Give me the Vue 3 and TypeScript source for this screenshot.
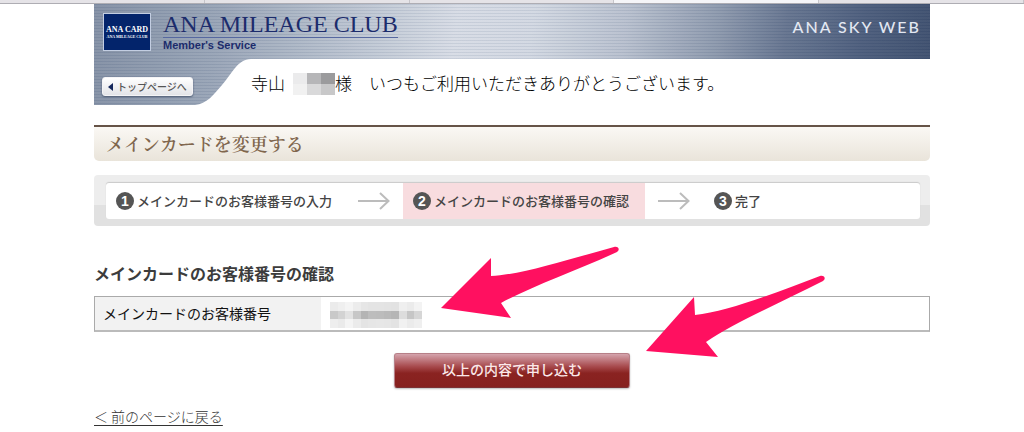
<script setup lang="ts">
interface Step {
  label: string
  current: boolean
}

const steps: Step[] = [
  { label: 'メインカードのお客様番号の入力', current: false },
  { label: 'メインカードのお客様番号の確認', current: true },
  { label: '完了', current: false },
]

const nameMask: string[][] = [
  ['#ebebec', '#b6b6b8', '#9b9b9d'],
  ['#f1f1f1', '#d9d9da', '#c8c8c9'],
]

const numberMask: string[][] = [
  ['#ebebeb', '#efefef', '#f4f4f4', '#ececec', '#e6e6e6', '#e4e4e4', '#e4e4e4', '#e3e3e3', '#e2e2e2', '#efefef', '#ebebeb', '#f3f3f3'],
  ['#c9c9c9', '#d3d3d3', '#e2e2e2', '#c7c7c7', '#b4b4b4', '#bdbdbd', '#bcbcbc', '#b9b9b9', '#b5b5b5', '#dddddd', '#c6c6c6', '#d6d6d6'],
  ['#eeeeee', '#eaeaea', '#f4f4f4', '#ebebeb', '#e4e4e4', '#e6e6e6', '#e7e7e7', '#e6e6e6', '#e3e3e3', '#f1f1f1', '#ebebeb', '#efefef'],
]
</script>

<template>
  <div class="screen">
    <div class="tabs" aria-hidden="true">
      <span class="tab"></span>
      <span class="tab"></span>
      <span class="tab"></span>
      <span class="tab active"></span>
      <span class="tab"></span>
    </div>

    <div class="page">
      <header class="banner">
        <div class="brand-row">
          <div class="badge">
            <span class="badge-main">ANA CARD</span>
            <span class="badge-sub">ANA MILEAGE CLUB</span>
          </div>
          <div class="brand">
            <span class="brand-name">ANA MILEAGE CLUB</span>
            <span class="brand-sub">Member's Service</span>
          </div>
          <span class="sky">ANA SKY WEB</span>
        </div>
        <div class="greet-row">
          <div class="top-cell">
            <button type="button" class="top-button">
              <svg width="5" height="8" viewBox="0 0 5 8"><path d="M5 0V8L0 4Z" fill="#15275c" /></svg>
              トップページへ
            </button>
          </div>
          <svg class="curve" width="56" height="46" viewBox="0 0 56 46">
            <path d="M0 46C12 45 18 36 27 26C39 12 42 1 56 0V46Z" fill="#fff" />
          </svg>
          <p class="greeting">
            <span>寺山</span>
            <svg class="name-mask" width="42" height="22" viewBox="0 0 42 22" shape-rendering="crispEdges">
              <template v-for="(row, r) in nameMask" :key="r">
                <rect v-for="(c, i) in row" :key="i" :x="i * 14" :y="r * 11" width="14" height="11" :fill="c" />
              </template>
            </svg>
            <span>様　いつもご利用いただきありがとうございます。</span>
          </p>
        </div>
      </header>

      <main>
        <h1 class="title">メインカードを変更する</h1>

        <div class="steps-frame">
          <ol class="steps">
            <li v-for="(step, i) in steps" :key="i" class="step" :class="{ current: step.current }">
              <span class="num">{{ i + 1 }}</span>
              <span>{{ step.label }}</span>
              <svg v-if="i === 0" class="next" width="32" height="18" viewBox="0 0 32 18"><path d="M0 9H30M22 1L30.500 9L22 17" /></svg>
              <svg v-if="i === 2" class="prev" width="32" height="18" viewBox="0 0 32 18"><path d="M0 9H30M22 1L30.500 9L22 17" /></svg>
            </li>
          </ol>
        </div>

        <h2 class="subtitle">メインカードのお客様番号の確認</h2>

        <table class="info">
          <tbody>
            <tr>
              <th scope="row">メインカードのお客様番号</th>
              <td>
                <svg class="number-mask" width="92" height="26" viewBox="0 0 96 27" preserveAspectRatio="none" shape-rendering="crispEdges">
                  <template v-for="(row, r) in numberMask" :key="r">
                    <rect v-for="(c, i) in row" :key="i" :x="i * 8" :y="r * 9" width="8" height="9" :fill="c" />
                  </template>
                </svg>
              </td>
            </tr>
          </tbody>
        </table>

        <button type="button" class="submit">以上の内容で申し込む</button>

        <p class="back"><a href="#">＜ 前のページに戻る</a></p>
      </main>

      <svg class="pointers" width="384" height="112" viewBox="441 246 384 112" aria-hidden="true">
        <path d="M441 308L491 258V276C520 275 570 259 614 247C619 246 620 250 617 252C578 270 530 287 501 303L511 318Z" />
        <path d="M646 351L694 297L695 315C728 312 780 291 820 276C825 275 826 279 823 281C780 303 735 322 706 342L718 357Z" />
      </svg>
    </div>
  </div>
</template>

<style>
body {
  margin: 0;
  background: #fff;
}
</style>

<style scoped>
.screen {
  font-family: "Liberation Sans", "Noto Sans CJK JP", sans-serif;
  color: #222;
}

.tabs {
  display: grid;
  grid-template-columns: repeat(5, 1fr);
  height: 4px;
  box-sizing: border-box;
  border-bottom: 1px solid #aeadb3;
}

.tab {
  background: #e5e3e7;
  border-right: 1px solid #c6c5ca;
}

.tab.active {
  background: #f5f5f8;
}

.page {
  position: relative;
  max-width: 836px;
  margin: 0 auto;
}

.banner {
  background:
    repeating-linear-gradient(180deg, rgba(60, 80, 115, 0.1) 0 1px, rgba(255, 255, 255, 0.04) 1px 3px),
    linear-gradient(97deg, #828fa4 0%, #98a4b6 15%, #b9c2cf 30%, #d7dce5 43%, #d2d8e2 52%, #b8c0ce 63%, #8c98ac 74%, #64738e 82%, #4b5c7b 91%, #3c4d6c 100%);
}

.brand-row {
  display: flex;
  align-items: flex-start;
  height: 55px;
}

.badge {
  box-sizing: border-box;
  width: 48px;
  height: 38px;
  margin: 9px 12px 0 9px;
  padding-top: 12px;
  border: 1px solid #c3cee2;
  background: #03246b;
  color: #fff;
  text-align: center;
  white-space: nowrap;
  overflow: hidden;
  display: flex;
  flex-direction: column;
  align-items: center;
}

.badge-main {
  font: bold 8px/8px "Liberation Serif", serif;
}

.badge-sub {
  font: bold 4px/5px "Liberation Serif", serif;
}

.brand {
  display: flex;
  flex-direction: column;
  margin-top: 8px;
  color: #1c2c6c;
}

.brand-name {
  font: 24px/25px "Liberation Serif", serif;
  border-bottom: 1px solid #5668a0;
}

.brand-sub {
  font-size: 11px;
  font-weight: bold;
  line-height: 15px;
}

.sky {
  margin: 14px 9px 0 auto;
  font: 500 16px/18px Lato, sans-serif;
  letter-spacing: 2px;
  color: #e3e8f2;
}

.greet-row {
  display: flex;
  height: 46px;
}

.top-cell {
  box-sizing: border-box;
  width: 101px;
  padding: 18px 0 0 8px;
}

.top-button {
  display: flex;
  align-items: center;
  gap: 4px;
  height: 19px;
  width: 91px;
  padding: 0 5px;
  border: 1px solid #f4f4f6;
  border-radius: 3px;
  background: linear-gradient(#fff, #e3e4e8);
  box-shadow: 0 1px 2px #4d5a72;
  color: #555;
  font: 500 10px/17px "Noto Sans CJK JP", sans-serif;
  white-space: nowrap;
}

.curve {
  display: block;
  flex: none;
}

.greeting {
  display: flex;
  flex: 1;
  align-items: center;
  margin: 0;
  padding-top: 1px;
  background: #fff;
  font: 300 17px/24px "Noto Sans CJK JP", sans-serif;
  white-space: nowrap;
  color: #000;
}

.name-mask {
  margin: 3px 0 0 8px;
}

.title {
  box-sizing: border-box;
  height: 36px;
  margin: 20px 0 14px;
  padding-left: 12px;
  border-top: 2px solid #665347;
  border-radius: 0 0 5px 5px;
  background: linear-gradient(#faf8f4, #e9e4da);
  color: #80664d;
  font: 600 18px/32px "Noto Serif CJK JP", "Noto Sans CJK JP", serif;
}

.steps-frame {
  padding: 8px 10px 7px 12px;
  border-radius: 4px;
  background: linear-gradient(#ededed 0 58%, #e1e1e1 58% 100%);
}

.steps {
  display: grid;
  grid-template-columns: 297fr 242fr 275fr;
  height: 36px;
  margin: 0;
  padding: 0;
  list-style: none;
  background: #fff;
  border-radius: 3px;
  box-shadow: 0 -1px 1px #c9c9c9;
}

.step {
  display: flex;
  align-items: center;
  gap: 3px;
  padding-left: 10px;
  font: 500 13px/20px "Noto Sans CJK JP", sans-serif;
  color: #444;
  white-space: nowrap;
}

.step.current {
  background: #f8dcdf;
}

.num {
  width: 18px;
  height: 18px;
  border-radius: 50%;
  background: #555;
  color: #fff;
  font: bold 14px/18px "Liberation Sans", sans-serif;
  text-align: center;
}

.next,
.prev {
  fill: none;
  stroke: #bcbcbc;
  stroke-width: 2;
}

.next {
  margin: 0 13px 0 auto;
}

.prev {
  order: -1;
  margin: 0 21px 0 3px;
}

.subtitle {
  margin: 35px 0 11px;
  font: bold 16px/24px "Noto Sans CJK JP", sans-serif;
  color: #3c3c3c;
}

.info {
  width: 100%;
  height: 36px;
  border: 1px solid #aaa;
  border-bottom: 2px solid #bbb;
  border-spacing: 0;
}

.info th {
  width: 218px;
  padding: 0 0 2px 8px;
  background: #f2f2f2;
  font: 400 14px/24px "Noto Sans CJK JP", sans-serif;
  text-align: left;
  color: #111;
}

.info td {
  padding: 3px 0 0 9px;
}

.number-mask {
  display: block;
}

.submit {
  display: block;
  width: 236px;
  height: 35px;
  margin: 21px auto 0;
  padding: 0 0 3px;
  border: 1px solid #b78088;
  border-bottom-color: #7b3033;
  border-radius: 3px;
  background: linear-gradient(#d5a4ad 0%, #a74a4d 38%, #8a2321 58%, #86201e 100%);
  box-shadow: 0 1px 2px #bbb;
  color: #fbe9e9;
  font: 500 14px/30px "Noto Sans CJK JP", sans-serif;
}

.back {
  margin: 16px 0 0;
  font: 300 14px/24px "Noto Sans CJK JP", sans-serif;
}

.back a {
  color: #333;
  text-decoration: underline;
  text-underline-offset: 3px;
}

.pointers {
  position: absolute;
  left: 347px;
  top: 242px;
  fill: #ff1060;
  pointer-events: none;
}
</style>
